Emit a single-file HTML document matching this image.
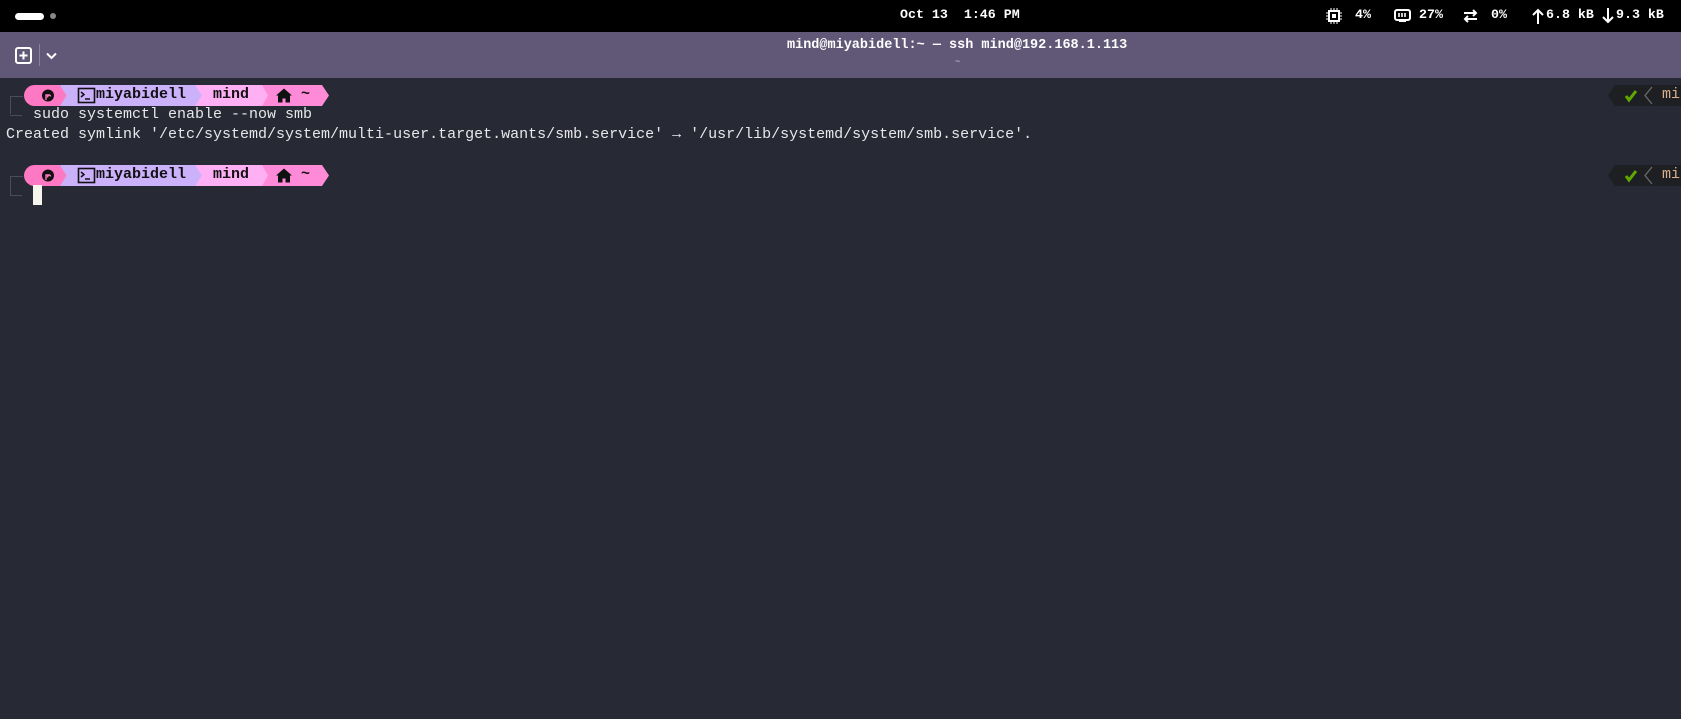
<!DOCTYPE html>
<html><head><meta charset="utf-8"><style>
html,body{margin:0;padding:0;width:1681px;height:719px;overflow:hidden;background:#272935;font-family:"Liberation Mono",monospace;}
.top{position:absolute;left:0;top:0;width:1681px;height:32px;background:#000;color:#fff;font-size:13.3px;}
.tb{position:absolute;left:0;top:32px;width:1681px;height:46px;background:#615877;color:#fff;}
.abs{position:absolute;white-space:pre;}
.term{color:#e8e8ea;font-size:15px;line-height:20px;}
</style></head><body>
<div class="top">
  <div class="abs" style="left:15px;top:13px;width:29px;height:7px;border-radius:4px;background:#fff"></div>
  <div class="abs" style="left:50px;top:13px;width:6px;height:6px;border-radius:3px;background:#888"></div>
  <div class="abs" style="left:900px;top:7px;font-weight:bold">Oct 13  1:46 PM</div>
  <svg class="abs" style="left:1326px;top:8px" width="16" height="16" viewBox="0 0 16 16"><rect x="3" y="3" width="10" height="10" fill="none" stroke="#fff" stroke-width="2"/><rect x="6" y="6" width="4" height="4" fill="#fff"/><path d="M5 0v3M8 0v3M11 0v3M5 13v3M8 13v3M11 13v3M0 5h3M0 8h3M0 11h3M13 5h3M13 8h3M13 11h3" stroke="#fff" stroke-width="1"/></svg>
  <div class="abs" style="left:1355px;top:7px;font-weight:bold">4%</div>
  <svg class="abs" style="left:1394px;top:9px" width="17" height="14" viewBox="0 0 17 14"><rect x="1" y="1" width="15" height="10" rx="2" fill="none" stroke="#fff" stroke-width="2"/><path d="M5 4v4M8 4v4M11 4v4" stroke="#fff" stroke-width="1.6"/><rect x="5" y="11" width="7" height="2" fill="#fff"/></svg>
  <div class="abs" style="left:1419px;top:7px;font-weight:bold">27%</div>
  <svg class="abs" style="left:1463px;top:8px" width="15" height="16" viewBox="0 0 15 16"><path d="M1 5h12M10 2l3 3-3 3M14 11H2M5 8l-3 3 3 3" fill="none" stroke="#fff" stroke-width="2"/></svg>
  <div class="abs" style="left:1491px;top:7px;font-weight:bold">0%</div>
  <svg class="abs" style="left:1532px;top:8px" width="12" height="16" viewBox="0 0 12 16"><path d="M6 16V2M1 7l5-5 5 5" fill="none" stroke="#fff" stroke-width="2"/></svg>
  <div class="abs" style="left:1546px;top:7px;font-weight:bold">6.8 kB</div>
  <svg class="abs" style="left:1602px;top:8px" width="12" height="16" viewBox="0 0 12 16"><path d="M6 0v14M1 9l5 5 5-5" fill="none" stroke="#fff" stroke-width="2"/></svg>
  <div class="abs" style="left:1616px;top:7px;font-weight:bold">9.3 kB</div>
</div>
<div class="tb">
  <svg class="abs" style="left:15px;top:15px" width="17" height="17" viewBox="0 0 17 17"><rect x="1" y="1" width="15" height="15" rx="2" fill="none" stroke="#fff" stroke-width="2"/><path d="M8.5 4.5v8M4.5 8.5h8" stroke="#fff" stroke-width="2"/></svg>
  <div class="abs" style="left:39px;top:12px;width:1px;height:22px;background:#8a819e"></div>
  <svg class="abs" style="left:46px;top:20px" width="11" height="8" viewBox="0 0 11 8"><path d="M1 1.5l4.5 4.5 4.5-4.5" fill="none" stroke="#fff" stroke-width="2"/></svg>
  <div class="abs" style="left:787px;top:6px;font-size:13.5px;font-weight:bold">mind@miyabidell:~ — ssh mind@192.168.1.113</div>
  <div class="abs" style="left:955px;top:25px;font-size:9px;color:#cfc8dc">~</div>
</div>

<!-- prompt 1 -->
<svg class="abs" style="left:0;top:85px" width="340" height="21" viewBox="0 85 340 21">
  <polygon points="258,85 322,85 329,95.5 322,106 258,106" fill="#ff8ad8"/>
  <polygon points="195,85 262,85 268,95.5 262,106 195,106" fill="#ffb0f5"/>
  <polygon points="58,85 195,85 202,95.5 195,106 58,106" fill="#cbb0fa"/>
  <path d="M34.5 85H60l6.5 10.5L60 106H34.5a10.5 10.5 0 0 1 0-21z" fill="#ff78c4"/>
  <circle cx="48" cy="95.5" r="6" fill="#111"/><path d="M46 100v-5h4M47.5 97.5c0-3 3-3 3-1" stroke="#ff78c4" stroke-width="1.4" fill="none"/>
  <rect x="78.5" y="88.5" width="16" height="14" fill="none" stroke="#111" stroke-width="1.6"/><path d="M81 92l3 2.5-3 2.5M85 99h5" stroke="#111" stroke-width="1.5" fill="none"/>
  <path d="M276 95.5l8-7 8 7h-2v7h-4.5v-4h-3v4H278v-7z" fill="#111"/>
</svg>
<div class="abs term" style="left:96px;top:85px;color:#111;font-weight:bold;line-height:20px">miyabidell</div>
<div class="abs term" style="left:213px;top:85px;color:#111;font-weight:bold;line-height:20px">mind</div>
<div class="abs term" style="left:301px;top:85px;color:#111;font-weight:bold">~</div>
<div class="abs" style="left:10px;top:96px;width:12px;height:17px;border-left:1px solid #4a4c58;border-top:1px solid #4a4c58"></div>
<div class="abs" style="left:10px;top:115px;width:12px;height:1px;background:#4a4c58"></div>
<div class="abs term" style="left:33px;top:105px">sudo systemctl enable --now smb</div>
<div class="abs term" style="left:6px;top:125px">Created symlink '/etc/systemd/system/multi-user.target.wants/smb.service' → '/usr/lib/systemd/system/smb.service'.</div>

<!-- prompt 2 -->
<svg class="abs" style="left:0;top:165px" width="340" height="21" viewBox="0 85 340 21">
  <polygon points="258,85 322,85 329,95.5 322,106 258,106" fill="#ff8ad8"/>
  <polygon points="195,85 262,85 268,95.5 262,106 195,106" fill="#ffb0f5"/>
  <polygon points="58,85 195,85 202,95.5 195,106 58,106" fill="#cbb0fa"/>
  <path d="M34.5 85H60l6.5 10.5L60 106H34.5a10.5 10.5 0 0 1 0-21z" fill="#ff78c4"/>
  <circle cx="48" cy="95.5" r="6" fill="#111"/><path d="M46 100v-5h4M47.5 97.5c0-3 3-3 3-1" stroke="#ff78c4" stroke-width="1.4" fill="none"/>
  <rect x="78.5" y="88.5" width="16" height="14" fill="none" stroke="#111" stroke-width="1.6"/><path d="M81 92l3 2.5-3 2.5M85 99h5" stroke="#111" stroke-width="1.5" fill="none"/>
  <path d="M276 95.5l8-7 8 7h-2v7h-4.5v-4h-3v4H278v-7z" fill="#111"/>
</svg>
<div class="abs term" style="left:96px;top:165px;color:#111;font-weight:bold">miyabidell</div>
<div class="abs term" style="left:213px;top:165px;color:#111;font-weight:bold">mind</div>
<div class="abs term" style="left:301px;top:165px;color:#111;font-weight:bold">~</div>
<div class="abs" style="left:10px;top:176px;width:12px;height:19px;border-left:1px solid #4a4c58;border-top:1px solid #4a4c58"></div>
<div class="abs" style="left:10px;top:195px;width:12px;height:1px;background:#4a4c58"></div>
<div class="abs" style="left:33px;top:185px;width:9px;height:20px;background:#f5f5ee"></div>

<!-- right segments -->
<svg class="abs" style="left:1600px;top:85px" width="81" height="101" viewBox="0 0 81 101">
  <g>
    <polygon points="8,10.5 15,0 81,0 81,21 15,21" fill="#1e1f23"/>
    <path d="M26 11l3 4 7-9" stroke="#5fa800" stroke-width="3" fill="none"/>
    <path d="M52 2l-7 8.5 7 8.5" stroke="#6a6a6a" stroke-width="1.3" fill="none"/>
  </g>
  <g transform="translate(0,80)">
    <polygon points="8,10.5 15,0 81,0 81,21 15,21" fill="#1e1f23"/>
    <path d="M26 11l3 4 7-9" stroke="#5fa800" stroke-width="3" fill="none"/>
    <path d="M52 2l-7 8.5 7 8.5" stroke="#6a6a6a" stroke-width="1.3" fill="none"/>
  </g>
</svg>
<div class="abs term" style="left:1662px;top:85px;color:#d8b08c">mi</div>
<div class="abs term" style="left:1662px;top:165px;color:#d8b08c">mi</div>
</body></html>
